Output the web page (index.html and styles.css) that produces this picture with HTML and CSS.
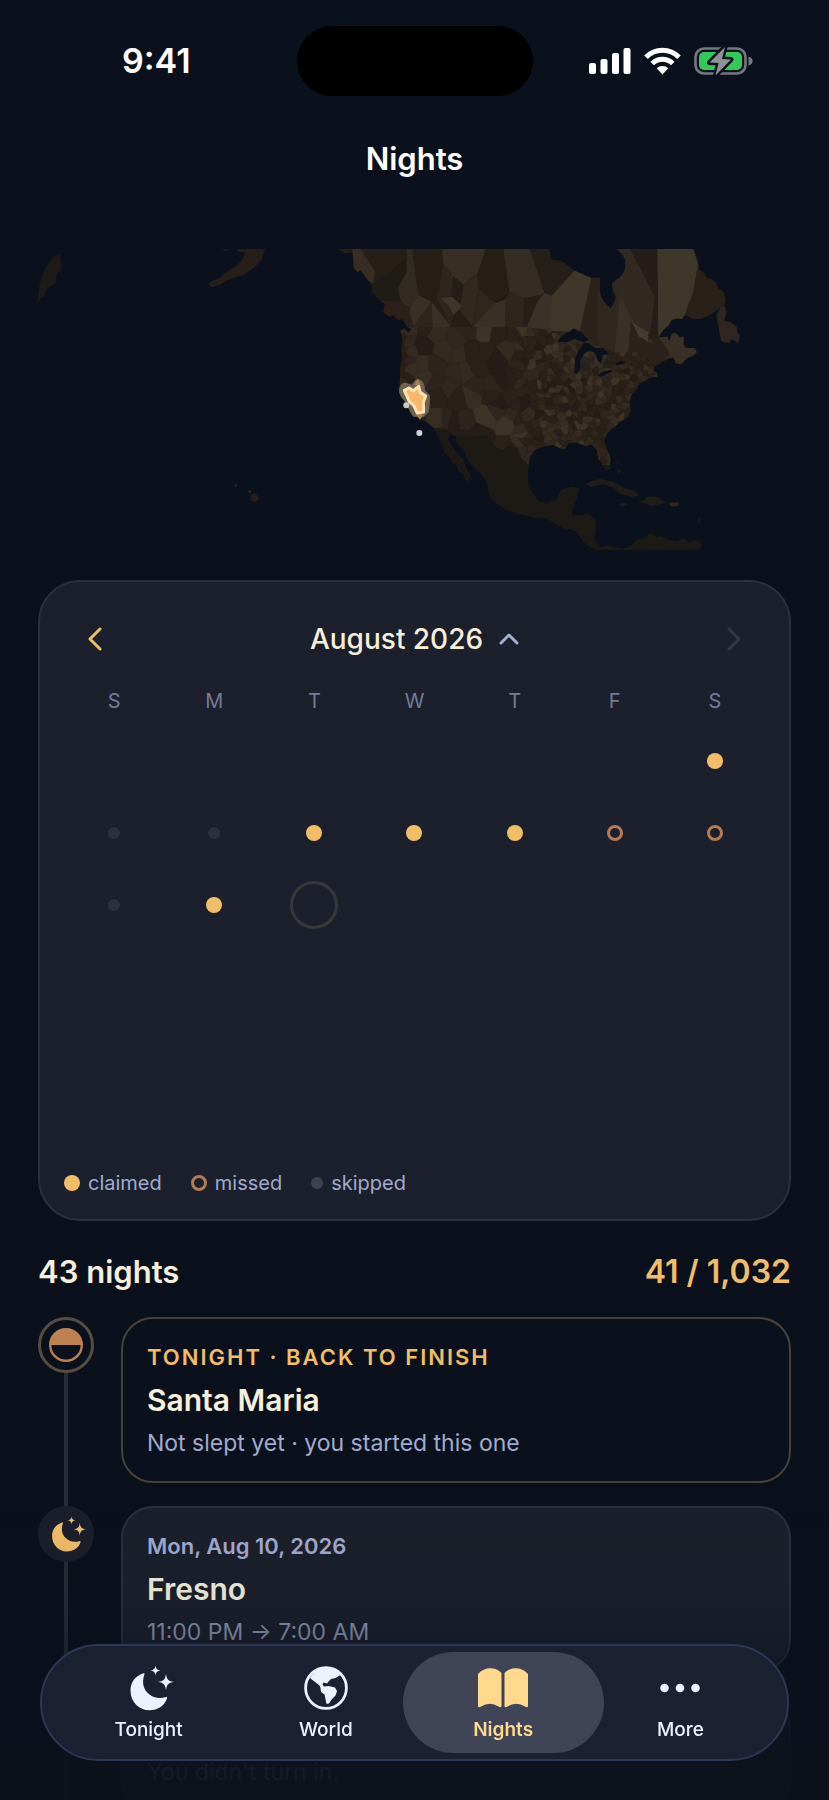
FILE: index.html
```html
<!DOCTYPE html>
<html lang="en">
<head>
<meta charset="utf-8">
<meta name="viewport" content="width=device-width, initial-scale=1">
<title>Nights</title>
<link rel="stylesheet" href="styles.css">
</head>
<body>
<svg class="defs" width="0" height="0" aria-hidden="true">
  <symbol id="moon-stars" viewBox="-6 0 50 46">
    <path d="M13.5 8.3C5 10.8 0.5 17.6 0.5 25.5 0.500 37 9 45.300 19.500 45.300 27.500 45.300 34.500 41 37 33.500 37.500 32 36.500 31.800 35.300 32.200 31 33.500 25 33.700 19.500 29.500 13.500 25 11.500 17.500 14.300 9.700 14.800 8.500 14.500 8 13.500 8.300Z"/>
    <path d="M25.500 .5c.6 3.400 1.600 4.400 5 5-3.400.6-4.400 1.600-5 5-.6-3.400-1.600-4.400-5-5 3.400-.6 4.400-1.600 5-5ZM36 8.800c.9 6 2.200 7.300 8 8.200-5.800.9-7.100 2.200-8 8.200-.9-6-2.200-7.300-8-8.200 5.800-.9 7.100-2.200 8-8.200Z"/>
  </symbol>
</svg>

<header class="status">
  <div class="status-side"><time class="clock">9:41</time></div>
  <div class="island"></div>
  <div class="status-side status-icons">
    <svg width="42" height="28" viewBox="0 0 42 28" fill="#fff" aria-hidden="true"><rect y="16" width="7" height="11" rx="2"/><rect x="11.500" y="12" width="7" height="15" rx="2"/><rect x="23" y="6" width="7" height="21" rx="2"/><rect x="34.500" y="1" width="7" height="26" rx="2"/></svg>
    <svg width="37" height="28" viewBox="0 0 37 28" fill="none" stroke="#fff" stroke-width="5" aria-hidden="true"><path d="M2 10.300a23 23 0 0 1 33 0M8.200 16.600a14.500 14.500 0 0 1 20.600 0"/><path fill="#fff" stroke="none" d="M12.700 21.300a8.300 8.300 0 0 1 11.600 0L18.500 27.500Z"/></svg>
    <svg width="59" height="28" viewBox="0 0 59 28" aria-hidden="true"><rect x="1.500" y="1.500" width="50" height="25" rx="8.500" fill="none" stroke="#747881" stroke-width="2.600"/><rect x="5" y="5" width="43" height="18" rx="5" fill="#34c759"/><path d="M54.500 9.500c5.500 1.500 5.500 7.500 0 9Z" fill="#747881"/><path d="M31 0 15.500 15.500 24.500 16 21.500 28.500 37 12.500 28 12Z" fill="#8e9098" stroke="#0b111c" stroke-width="5" paint-order="stroke" stroke-linejoin="round"/></svg>
  </div>
</header>

<main class="page">
  <h1 class="title">Nights</h1>

  <svg class="map" viewBox="-876 39 2259 909" role="img" aria-label="Map of claimed areas in North America">
    <defs>
      <clipPath id="land">
        <path d="M22 42 45 55 68 52 72 105 82 112 92 105 106 125 122 146 128 175 146 192 165 208 160 232 176 246 190 240 205 255 218 252 232 276 244 282 236 294 222 280 210 288 217 310 214 340 216 370 211 395 210 430 208 460 222 492 234 520 245 540 270 552 290 562 312 580 324 604 336 630 345 655 360 666 366 680 380 690 390 712 400 716 412 740 420 730 427 735 416 712 406 696 398 672 380 656 366 634 354 614 356 600 378 602 380 622 388 632 405 650 412 672 425 690 440 706 458 722 470 740 478 785 500 805 530 825 562 836 572 838V42Z"/>
        <path transform="translate(570 0)" d="M0 42V838L20 842 45 848 80 850 110 868 130 880 150 882 172 892 190 920 215 940 240 946 290 944 320 946 542 943 542 920 525 915 505 922 490 910 470 920 448 916 420 902 410 908 395 893 378 905 350 915 330 935 305 943 270 932 240 936 222 910 228 880 225 850 205 838 160 842 154 830 168 795 178 762 155 755 125 765 110 795 80 804 55 798 40 780 28 760 22 725 26 695 30 665 45 645 70 635 100 630 120 640 135 642 145 625 170 622 195 634 215 628 230 645 235 670 248 690 258 706 268 702 272 672 262 645 253 620 258 600 272 585 300 562 325 545 332 525 328 500 335 480 352 460 358 444 378 438 385 428 412 425 412 414 400 408 404 396 430 378 448 370 462 366 490 345 455 352 468 385 484 388 500 370 520 362 530 352 525 340 495 338 490 325 492 304 480 308 468 293 455 295 448 320 442 305 415 307 430 285 445 272 455 255 470 250 485 252 497 240 515 250 540 253 570 240 590 225 612 212 617 195 612 172 595 160 590 145 575 132 560 128 552 112 538 106 535 70 520 42H290L308 60 316 75 316 100 305 122 275 145 278 165 288 188 280 208 272 220 255 205 243 185 238 160 242 128H212L160 105 130 80 110 76 95 74 88 42Z"/>
      </clipPath>
    </defs>
    <g fill="#1e1a17">
      <path d="M-877 205C-876 140-850 65-808 57L-810 72-803 100-815 110-822 125-824 148-840 152-852 165-856 182-868 190Z"/>
      <path fill="#271e18" d="M-195 42-205 75-225 95-255 118-290 130-300 132-318 142-330 150-355 156-364 147-355 138-330 128-310 110-280 92-262 72-255 52-275 50-280 42Z M-325 42-300 42-312 48Z"/>
      <path fill="#271e18" d="M-238 778-225 774-212 790-225 802-238 796Z"/><circle cx="-283" cy="751" r="4" fill="#29292c"/><circle cx="-241" cy="770" r="4" fill="#29292c"/>
    </g>
    <g clip-path="url(#land)">
      <rect x="0" y="39" width="1250" height="909" fill="#1d1a16"/>
      <g id="cells"></g>
      <path fill="#1d1a16" d="M290 562 312 580 350 582 368 598 430 605 470 600 500 638 520 644 535 632 562 640 575 670 595 690V950H280Z M720 690H1250V950H560V700Z"/>
      <g>
        <path fill="#281e18" d="M0 42H230L225 75 130 150Z"/><path fill="#382d22" d="M68 42H92L135 110 130 145 95 130 60 80Z"/><path fill="#1f1b15" d="M225 75 230 110 205 150 215 200 190 212 120 195 125 155Z"/><path fill="#2c2018" d="M120 195 215 200 250 240 235 285 150 275Z"/><path fill="#332a21" d="M230 42H247L265 180 240 215 215 205 203 160 230 110Z"/><path fill="#281e18" d="M247 42H335L340 90 320 195 305 198 265 180Z"/><path fill="#382e24" d="M335 42H468L443 115 400 150 370 125 340 90Z"/><path fill="#2e251e" d="M340 90 370 125 365 188 320 195Z"/><path fill="#251d17" d="M370 125 400 150 395 210 365 185Z"/><path fill="#32291f" d="M400 150 443 115 445 160 425 272 390 225Z"/><path fill="#271e18" d="M468 42H520L538 170 495 205 445 160 443 115Z"/><path fill="#352c23" d="M520 42H600L645 178 580 190 538 170Z"/>
        <path fill="#2a211b" d="M215 205 240 215 250 275H225Z"/><path fill="#3a3025" d="M265 180 305 200 250 272 238 230Z"/><path fill="#2e251d" d="M305 200 308 276H248Z"/><path fill="#3a3025" d="M305 200 362 276H308Z"/><path fill="#281f19" d="M305 197 320 195 350 240 362 274Z"/><path fill="#2e251e" d="M320 195 365 185 395 210 360 274 345 235Z"/><path fill="#40362a" d="M334 190 365 185 396 212 370 241 358 215Z"/><path fill="#261d17" d="M370 240 390 225 428 276H360Z"/><path fill="#2f261e" d="M445 160 495 205 428 276Z"/><path fill="#3a3025" d="M495 205 528 192 525 276H428L465 240Z"/><path fill="#2f251e" d="M528 190 538 170 580 190 582 276H525Z"/><path fill="#261e18" d="M580 190 645 178 612 276H580Z"/>
      </g>
      <g transform="translate(570 0)">
        <path fill="#261e18" d="M30 42H88L130 80 165 108 95 182 75 175Z"/><path fill="#3b3126" d="M75 175 96 182 92 285 20 276 55 195Z"/><path fill="#40372a" d="M95 182 165 105 215 128 180 290 92 288Z"/><path fill="#2b221b" d="M215 125H240V330L180 310V285Z"/><path fill="#30271f" d="M232 150 300 140 303 185 285 350 232 330Z"/><path fill="#3a3025" d="M300 180 332 250 325 352H284Z"/><path fill="#322a22" d="M290 42H332L405 185 390 300 350 272 300 180 280 140Z"/><path fill="#271d18" d="M330 42H412V312H388L405 185Z"/><path fill="#40372b" d="M412 42H520L535 90 520 170 490 250 415 305Z"/><path fill="#292018" d="M535 80 640 170 620 260H490L520 170Z"/><path fill="#2b221b" d="M325 350 333 258 355 305 395 325 412 310 452 352 405 392 360 350Z"/><path fill="#453b2f" d="M336 262 385 292 384 320 356 302Z"/><path fill="#3a3025" d="M412 300H540V395H465L448 352Z"/>
      </g>
      <path fill="#0b111c" transform="translate(570 0)" d="M112 320 128 300 150 290 160 280 185 292 205 315 190 322 165 312 140 322ZM192 322 205 325 225 338 250 340 268 358 248 360 244 386 232 376 224 352 208 346 194 355 180 374 182 400 170 418 163 412 165 375 176 348ZM232 420 255 408 272 404 278 408 255 420 240 426ZM284 386 300 378 318 380 312 386 292 390Z"/>
    </g>
    <g transform="translate(570 0)" fill="#201c18">
      <path fill="#2f271f" d="M590 240 600 218 614 212 620 232 612 258 632 262 650 275 652 290 660 302 655 325 635 312 628 325 604 318 598 290Z"/>
      <path d="M198 748 215 738 240 732 280 740 310 758 345 768 356 782 335 786 300 776 282 758 250 748 212 756ZM355 800 375 794 378 785 412 785 438 803 420 808 390 814 378 806ZM295 806 315 804 325 810 308 816ZM282 680H298L296 684ZM290 700 302 704 298 720ZM535 850H540V866H535Z"/>
      <path fill="#332a20" d="M448 803 474 802 476 810 468 814 450 814Z"/>
    </g>
    <path fill="#6c6250" d="M209 456Q216 441 230 444L246 449Q256 430 266 432 286 440 285 465L300 482Q300 510 296 532L280 546 250 545Q238 528 230 508L213 485Q203 470 209 456Z"/>
    <path fill="#b47a50" d="M263 432 273 450H252ZM258 538H280L270 555Z"/>
    <path fill="#fab66b" stroke="#ffe5b4" stroke-width="9" stroke-linejoin="round" d="M223 466 237 459 250 467 266 454 271 472 287 483 280 502 281 531 262 534 251 511 238 500 230 482Z"/>
    <circle cx="229" cy="511" r="9" fill="#c9c9c9"/><circle cx="268" cy="594" r="9" fill="#d3d4d5"/>
  </svg>

  <section class="calendar" aria-label="Calendar">
    <div class="month-bar">
      <button class="step" type="button" aria-label="Previous month"><svg width="14" height="24" viewBox="0 0 14 24" aria-hidden="true"><path d="M12 2 2 12 12 22"/></svg></button>
      <button class="month" type="button">August 2026 <svg width="20" height="12" viewBox="0 0 20 12" aria-hidden="true"><path d="M2 10 10 2 18 10"/></svg></button>
      <button class="step" type="button" aria-label="Next month" disabled><svg width="14" height="24" viewBox="0 0 14 24" aria-hidden="true"><path d="M2 2 12 12 2 22"/></svg></button>
    </div>
    <table class="days">
      <thead><tr><th scope="col">S</th><th scope="col">M</th><th scope="col">T</th><th scope="col">W</th><th scope="col">T</th><th scope="col">F</th><th scope="col">S</th></tr></thead>
      <tbody>
        <tr><td></td><td></td><td></td><td></td><td></td><td></td><td><i class="dot claimed"></i></td></tr>
        <tr><td><i class="dot skipped"></i></td><td><i class="dot skipped"></i></td><td><i class="dot claimed"></i></td><td><i class="dot claimed"></i></td><td><i class="dot claimed"></i></td><td><i class="dot missed"></i></td><td><i class="dot missed"></i></td></tr>
        <tr><td><i class="dot skipped"></i></td><td><i class="dot claimed"></i></td><td><i class="dot today"></i></td><td></td><td></td><td></td><td></td></tr>
        <tr><td></td><td></td><td></td><td></td><td></td><td></td><td></td></tr>
        <tr><td></td><td></td><td></td><td></td><td></td><td></td><td></td></tr>
        <tr><td></td><td></td><td></td><td></td><td></td><td></td><td></td></tr>
      </tbody>
    </table>
    <ul class="legend">
      <li><i class="dot claimed"></i>claimed</li>
      <li><i class="dot missed"></i>missed</li>
      <li><i class="dot skipped"></i>skipped</li>
    </ul>
  </section>

  <div class="totals"><h2>43 nights</h2><span class="score">41 / 1,032</span></div>

  <ol class="timeline">
    <li class="entry">
      <div class="rail"><span class="node node-tonight"><svg width="34" height="34" viewBox="0 0 34 34" aria-hidden="true"><circle cx="17" cy="17" r="15.800" fill="none" stroke="#bd8152" stroke-width="2.400"/><path d="M1 17a16 16 0 0 1 32 0Z" fill="#bd8152"/></svg></span></div>
      <article class="night tonight"><p class="kicker">TONIGHT · BACK TO FINISH</p><h3>Santa Maria</h3><p>Not slept yet · you started this one</p></article>
    </li>
    <li class="entry">
      <div class="rail"><span class="node"><svg class="gold" width="39" height="36" aria-hidden="true"><use href="#moon-stars"/></svg></span></div>
      <article class="night"><p class="date">Mon, Aug 10, 2026</p><h3>Fresno</h3><p class="hours">11:00 PM → 7:00 AM</p></article>
    </li>
    <li class="entry">
      <div class="rail"></div>
      <article class="night unslept"><p>You didn't turn in.</p></article>
    </li>
  </ol>
</main>

<div class="fade"></div>
<nav class="tabs" aria-label="Main">
  <a class="tab" href="#tonight"><span class="tab-icon"><svg width="50" height="46" aria-hidden="true"><use href="#moon-stars"/></svg></span>Tonight</a>
  <a class="tab" href="#world"><span class="tab-icon"><svg width="44" height="44" viewBox="0 0 44 44" aria-hidden="true"><circle cx="22" cy="22" r="20.400" fill="none" stroke="currentColor" stroke-width="2.800"/><path d="M6 12C11 4 17 2 22 2 28 2 33 5 36.500 9L31.500 12 27 13 24.500 15.500 23 17.500 19.500 16.500 18.500 18.500 20 20.500 24.500 20 31 21.500 33 25 31.500 29.500 28 33 25 37.500 22.500 38 21.500 33 20.500 28.500 17 26 16.500 22 15.500 19.500 11 16Z"/></svg></span>World</a>
  <a class="tab active" href="#nights" aria-current="page"><span class="tab-icon"><svg width="50" height="40" viewBox="0 0 50 40" aria-hidden="true"><path d="M0 6C6-1.500 18-1.500 23.500 5V38.500Q22.500 40 20.500 38.500 12 33 3 38.500 1 40 0 38.500ZM26.500 5C32-1.500 44-1.500 50 6V38.500Q49 40 47 38.500 38 33 29.500 38.500 27.500 40 26.500 38.500Z"/></svg></span>Nights</a>
  <a class="tab" href="#more"><span class="tab-icon"><svg width="40" height="10" viewBox="0 0 40 10" aria-hidden="true"><circle cx="4.500" cy="5" r="4.300"/><circle cx="20" cy="5" r="4.300"/><circle cx="35.500" cy="5" r="4.300"/></svg></span>More</a>
</nav>
<script src="map.js"></script>
</body>
</html>
```

FILE: styles.css
```css
* { box-sizing: border-box; }
html { height: 100%; overflow: hidden; background: #0b111c; }
body {
  margin: 0;
  height: 100%;
  overflow: hidden;
  background: #0b111c;
  color: #f5efdc;
  font-family: Inter, "Liberation Sans", sans-serif;
}
h1, h2, h3, p, ul, ol { margin: 0; padding: 0; font-weight: 600; }
ul, ol { list-style: none; }
button { margin: 0; padding: 0; border: 0; background: none; color: inherit; font: inherit; }
svg { display: block; flex: none; }
.defs { position: absolute; }

.status {
  display: grid;
  grid-template-columns: 1fr 236px 1fr;
  align-items: center;
  padding-top: 26px;
}
.status-side { display: flex; justify-content: center; }
.clock { font-size: 34px; font-weight: 600; line-height: 70px; color: #fff; padding-left: 16px; }
.island { height: 70px; border-radius: 35px; background: #000; }
.status-icons { gap: 13px; padding-right: 20px; }

.page { padding: 0 38px; }
.title { margin-top: 43px; font-size: 31px; line-height: 40px; text-align: center; color: #fff; }
.map { width: 100%; height: auto; margin-top: 69px; }

.calendar {
  margin-top: 29px;
  padding: 23px 24px 24px;
  border: 2px solid #2b303c;
  border-radius: 42px;
  background: #1b202c;
}
.month-bar { display: flex; justify-content: space-between; height: 68px; }
.step { display: flex; align-items: center; justify-content: center; width: 62px; color: #f1bc65; }
.step:disabled { color: #343945; }
.month { display: flex; align-items: center; gap: 16px; font-size: 28px; font-weight: 500; }
.month svg { color: #a4afd3; }
.month-bar path { fill: none; stroke: currentColor; stroke-width: 3; stroke-linecap: round; stroke-linejoin: round; }

.days { width: 100%; table-layout: fixed; border-collapse: collapse; }
.days th { height: 52px; padding: 4px 0 0; font-size: 20px; font-weight: 400; color: #737c99; }
.days td { height: 72px; padding: 0; }
.dot { display: block; flex: none; width: 16px; height: 16px; border-radius: 50%; }
.days .dot { margin: 0 auto; }
.claimed { background: #f1bd67; }
.missed { border: 3px solid #b67b50; }
.days .skipped { width: 12px; height: 12px; background: #2c313c; }
.days .today { width: 48px; height: 48px; border: 3px solid #393839; }
.legend { display: flex; gap: 29px; margin-top: 14px; font-size: 20px; line-height: 24px; color: #a1abd0; }
.legend li { display: flex; align-items: center; gap: 8px; font-weight: 400; }
.legend .skipped { width: 12px; height: 12px; background: #3f434e; }

.totals { display: flex; justify-content: space-between; margin: 30px 0 25px; font-size: 31px; line-height: 41px; font-weight: 600; }
.totals h2 { font-size: inherit; }
.score { font-size: 32px; color: #f1bd67; }

.entry { display: flex; gap: 27px; font-weight: 400; }
.rail {
  flex: none;
  width: 56px;
  background: linear-gradient(#272c37, #272c37) center / 4px 100% no-repeat;
}
.node { display: flex; align-items: center; justify-content: center; width: 56px; height: 56px; border-radius: 50%; background: #1b1f2b; }
.node-tonight { border: 3px solid #564d40; background: #0b111c; }
.gold { fill: #f1bd67; }
.night {
  flex: 1;
  display: grid;
  gap: 7px;
  margin-bottom: 23px;
  padding: 23px 24px;
  border: 2px solid #2b303c;
  border-radius: 32px;
  background: #1b202c;
}
.tonight { border-color: #484137; background: none; }
.unslept { padding-top: 60px; }
.night h3 { font-size: 30px; line-height: 42px; }
.night p { font-size: 23px; line-height: 30px; font-weight: 400; color: #a1abd0; }
.night .kicker { font-size: 22px; font-weight: 600; letter-spacing: 2px; color: #f1bd67; }
.night .date { font-size: 22px; font-weight: 600; }
.night .hours { color: #9199b8; }

.fade {
  position: fixed;
  inset: auto 0 0;
  height: 290px;
  background: linear-gradient(rgba(11,16,27,0), rgba(11,16,27,.08) 32%, rgba(12,16,28,.4) 52%, rgba(13,17,29,.94) 82%);
}
.tabs {
  position: fixed;
  left: 40px;
  right: 40px;
  bottom: 39px;
  display: grid;
  grid-template-columns: repeat(4, 1fr);
  height: 117px;
  padding: 6px 18px;
  border: 2px solid #2c3857;
  border-radius: 59px;
  background: #1b2032;
}
.tab {
  display: flex;
  flex-direction: column;
  align-items: center;
  margin: 0 -12px;
  padding-top: 8px;
  border-radius: 51px;
  font-size: 19px;
  line-height: 24px;
  font-weight: 500;
  color: #eef2ff;
  text-decoration: none;
}
.tab-icon { display: flex; align-items: center; height: 56px; margin-bottom: 2px; }
.tab svg { fill: currentColor; }
.active { background: #3f4457; color: #ffda8c; font-weight: 600; }
```

FILE: map.js
```js
// Tessellates the United States part of the map into Voronoi areas.
// Areas get smaller towards the densely settled east.
(function () {
  var seed = 7;
  function rnd() {
    seed = (seed * 16807) % 2147483647;
    return seed / 2147483647;
  }
  var shades = ['#271d18', '#2b211a', '#31271e', '#372d23', '#3d3327', '#2e241d', '#292019', '#342a20'];
  var pts = [];
  function fill(x0, x1, y0, y1, step) {
    for (var y = y0; y < y1; y += step)
      for (var x = x0; x < x1; x += step)
        pts.push([x + rnd() * step, y + rnd() * step]);
  }
  fill(195, 250, 275, 600, 28);
  fill(250, 560, 275, 650, 48);
  fill(560, 630, 275, 700, 26);
  fill(630, 1010, 275, 720, 18);

  function cell(i) {
    var p = pts[i];
    var poly = [[p[0] - 90, p[1] - 90], [p[0] + 90, p[1] - 90], [p[0] + 90, p[1] + 90], [p[0] - 90, p[1] + 90]];
    pts.forEach(function (q, j) {
      if (i === j || Math.abs(q[0] - p[0]) > 180 || Math.abs(q[1] - p[1]) > 180) return;
      var dx = q[0] - p[0], dy = q[1] - p[1];
      var mid = dx * (p[0] + q[0]) / 2 + dy * (p[1] + q[1]) / 2;
      var out = [];
      poly.forEach(function (a, k) {
        var b = poly[(k + 1) % poly.length];
        var da = a[0] * dx + a[1] * dy - mid, db = b[0] * dx + b[1] * dy - mid;
        if (da <= 0) out.push(a);
        if ((da < 0 && db > 0) || (da > 0 && db < 0)) {
          var t = da / (da - db);
          out.push([a[0] + t * (b[0] - a[0]), a[1] + t * (b[1] - a[1])]);
        }
      });
      poly = out;
    });
    return poly;
  }

  var group = document.getElementById('cells');
  pts.forEach(function (p, i) {
    var el = document.createElementNS('http://www.w3.org/2000/svg', 'polygon');
    el.setAttribute('points', cell(i).map(function (v) { return v[0].toFixed(1) + ',' + v[1].toFixed(1); }).join(' '));
    var shade = shades[Math.floor(rnd() * shades.length)];
    el.setAttribute('fill', shade);
    el.setAttribute('stroke', shade);
    group.appendChild(el);
  });
})();
```
